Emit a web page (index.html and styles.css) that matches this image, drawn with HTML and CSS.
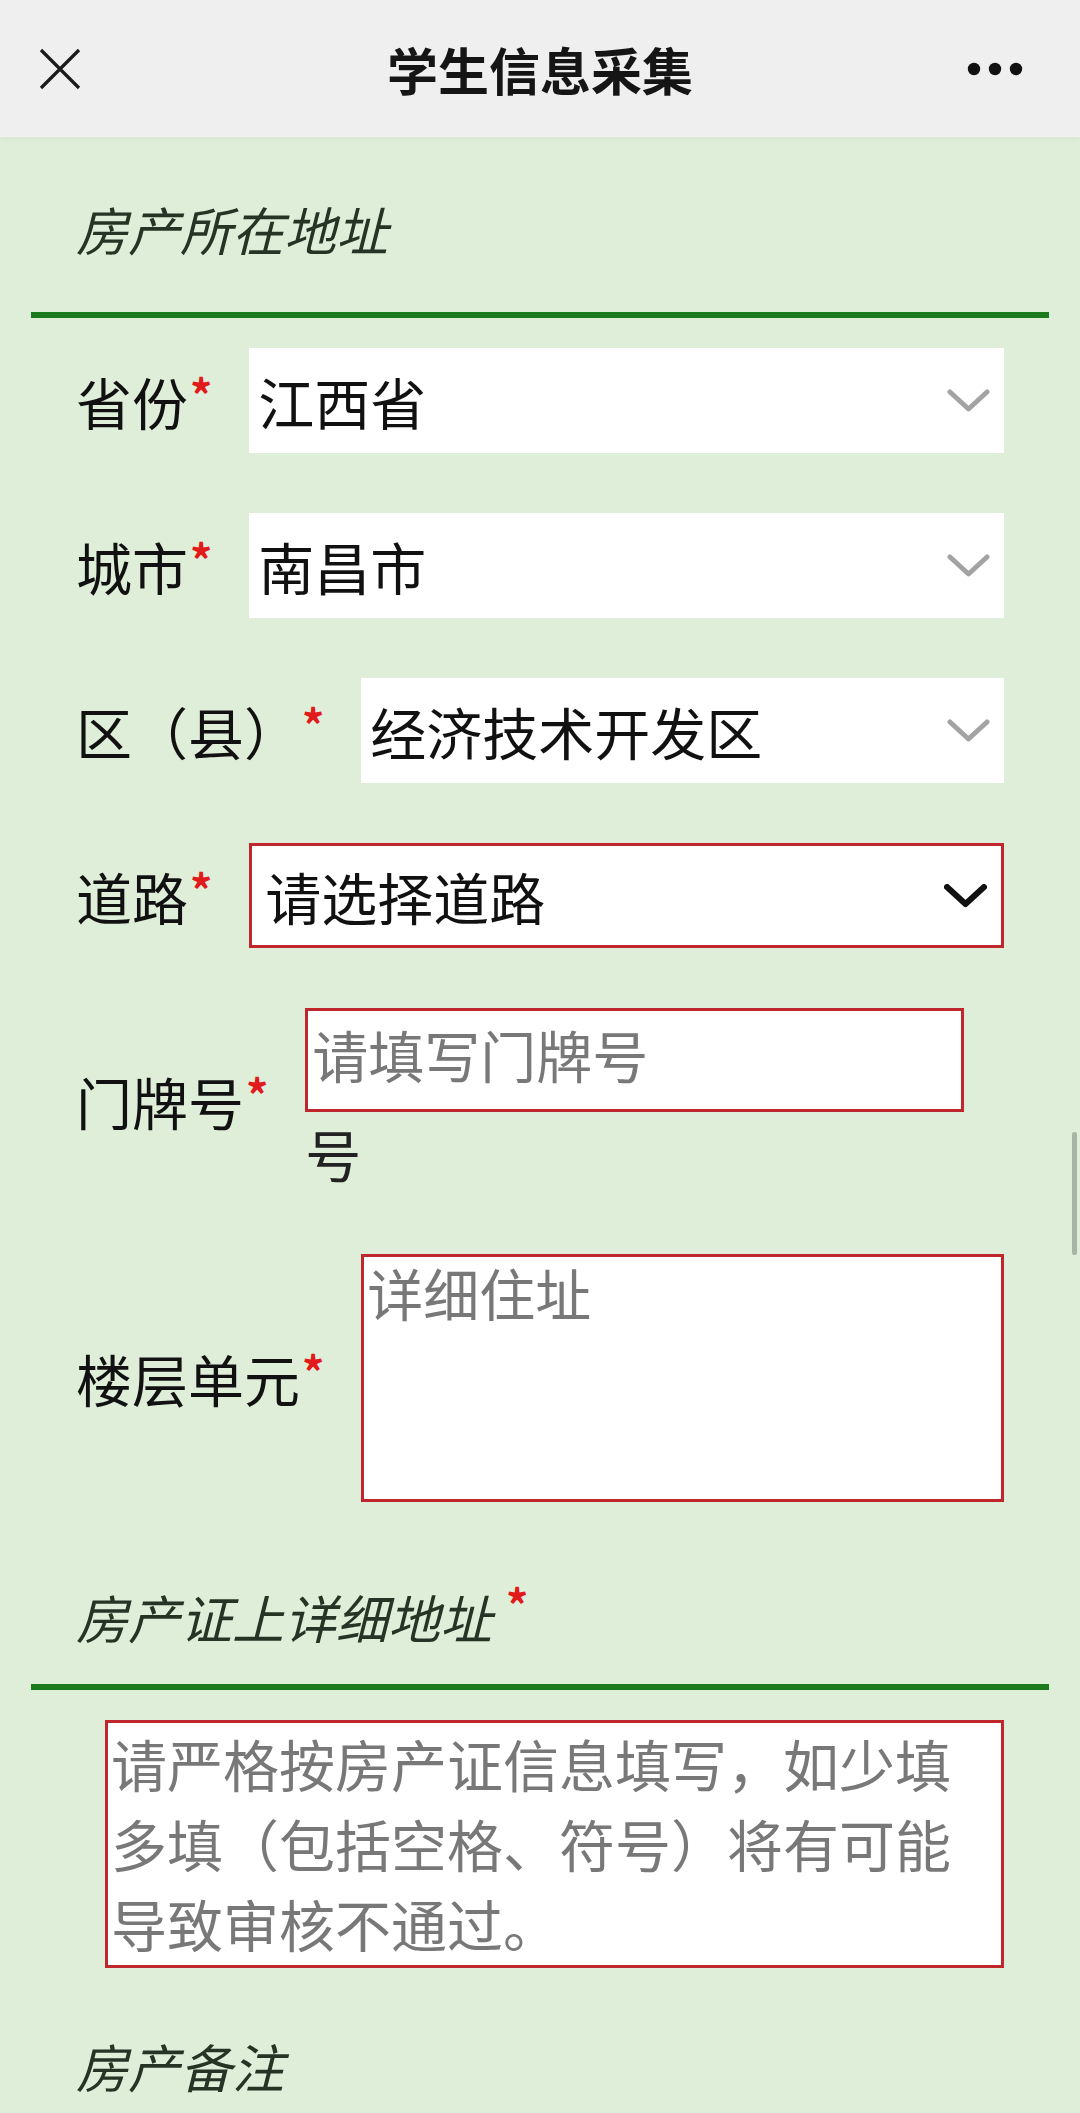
FILE: index.html
```html
<!DOCTYPE html>
<html lang="zh-CN">
<head>
<meta charset="UTF-8">
<meta name="viewport" content="width=device-width, initial-scale=1.0">
<title>学生信息采集</title>
<link rel="stylesheet" href="styles.css">
</head>
<body>

<div class="topbar">
  <div class="topbar-side">
    <svg class="icon-close" width="44" height="42" viewBox="0 0 44 42">
      <path d="M3 2 L41 40 M41 2 L3 40" stroke="#1a1a1a" stroke-width="3.2" fill="none"/>
    </svg>
  </div>
  <div class="topbar-title">学生信息采集</div>
  <div class="topbar-side right">
    <svg class="icon-more" width="56" height="14" viewBox="0 0 56 14">
      <circle cx="7" cy="7" r="6.2" fill="#111"/>
      <circle cx="28" cy="7" r="6.2" fill="#111"/>
      <circle cx="49" cy="7" r="6.2" fill="#111"/>
    </svg>
  </div>
</div>

<div class="page">
  <div class="section-title first">房产所在地址</div>

  <div class="form-row first">
    <label class="field-label">省份<span class="req">*</span></label>
    <div class="select">
      <span>江西省</span>
      <svg class="chevron" width="43" height="24" viewBox="0 0 43 24"><polyline points="3,3 21.5,20 40,3"/></svg>
    </div>
  </div>

  <div class="form-row">
    <label class="field-label">城市<span class="req">*</span></label>
    <div class="select">
      <span>南昌市</span>
      <svg class="chevron" width="43" height="24" viewBox="0 0 43 24"><polyline points="3,3 21.5,20 40,3"/></svg>
    </div>
  </div>

  <div class="form-row">
    <label class="field-label">区（县）<span class="req">*</span></label>
    <div class="select">
      <span>经济技术开发区</span>
      <svg class="chevron" width="43" height="24" viewBox="0 0 43 24"><polyline points="3,3 21.5,20 40,3"/></svg>
    </div>
  </div>

  <div class="form-row">
    <label class="field-label">道路<span class="req">*</span></label>
    <div class="select invalid">
      <span>请选择道路</span>
      <svg class="chevron dark" width="43" height="24" viewBox="0 0 43 24"><polyline points="3,3 21.5,20 40,3"/></svg>
    </div>
  </div>

  <div class="form-row">
    <label class="field-label">门牌号<span class="req">*</span></label>
    <div class="field-group">
      <input class="text-input invalid" type="text" placeholder="请填写门牌号">
      <span class="suffix">号</span>
    </div>
  </div>

  <div class="form-row last">
    <label class="field-label">楼层单元<span class="req">*</span></label>
    <textarea class="text-area invalid" placeholder="详细住址"></textarea>
  </div>

  <div class="section-title second">房产证上详细地址<span class="req">*</span></div>
  <textarea class="text-area wide invalid" placeholder="请严格按房产证信息填写，如少填多填（包括空格、符号）将有可能导致审核不通过。"></textarea>

  <div class="section-title third">房产备注</div>
</div>

<div class="scroll-thumb"></div>

</body>
</html>
```

FILE: styles.css
```css
body {
  margin: 0;
  padding: 0;
  background-color: #dfeed8;
  font-family: "Noto Sans CJK SC", "Noto Sans", sans-serif;
  color: #111;
}

.topbar {
  height: 137px;
  display: flex;
  align-items: center;
  background-color: #efefef;
  box-shadow: 0 2px 6px rgba(0,0,0,0.04);
}

.topbar-side {
  width: 150px;
  display: flex;
  align-items: center;
  padding-left: 38px;
  box-sizing: border-box;
}

.topbar-side.right {
  justify-content: flex-end;
  padding-left: 0;
  padding-right: 57px;
}

.topbar-title {
  flex: 1;
  text-align: center;
  font-size: 51px;
  font-weight: 700;
  line-height: 60px;
  color: #151515;
}

.page {
  padding: 0 31px;
}

.section-title {
  font-size: 52px;
  line-height: 72px;
  font-style: italic;
  color: #263426;
  padding-left: 45px;
  border-bottom: 6px solid #1b7a1b;
}

.section-title.first {
  padding-top: 56px;
  padding-bottom: 47px;
}

.section-title.second {
  padding-top: 79px;
  padding-bottom: 31px;
}

.section-title.third {
  padding-top: 62px;
  padding-bottom: 20px;
  border-bottom: none;
}

.section-title .req {
  font-style: normal;
  margin-left: 14px;
}

.form-row {
  display: flex;
  align-items: center;
  padding: 0 45px;
  margin-bottom: 60px;
}

.form-row.first {
  margin-top: 30px;
}

.form-row.last {
  margin-bottom: 0;
}

.field-label {
  font-size: 56px;
  line-height: 60px;
  white-space: nowrap;
  margin-right: 37px;
}

.req {
  color: #e11b1b;
  font-size: 44px;
  font-weight: 700;
  line-height: 1;
  vertical-align: top;
  margin-left: 2px;
}

.select {
  flex: 1;
  height: 105px;
  box-sizing: border-box;
  background-color: #fff;
  display: flex;
  align-items: center;
  justify-content: space-between;
  padding: 0 14px 0 9px;
  font-size: 56px;
  line-height: 1;
}

.select.invalid {
  border: 3px solid #c0272d;
  padding: 0 14px 0 13px;
}

.chevron polyline {
  fill: none;
  stroke: #a3a3a3;
  stroke-width: 5;
  stroke-linecap: round;
  stroke-linejoin: round;
}

.chevron.dark polyline {
  stroke: #111;
  stroke-width: 6;
}

.field-group {
  flex: 1;
  display: flex;
  flex-wrap: wrap;
}

.text-input {
  width: 659px;
  height: 104px;
  box-sizing: border-box;
  font-family: inherit;
  font-size: 56px;
  color: #111;
  background-color: #fff;
  padding: 0 6px 14px 4px;
  outline: none;
}

.invalid {
  border: 3px solid #c0272d;
}

.text-input::placeholder,
.text-area::placeholder {
  color: #787878;
  opacity: 1;
}

.suffix {
  font-size: 56px;
  line-height: 82px;
  color: #222;
}

.text-area {
  flex: 1;
  height: 248px;
  box-sizing: border-box;
  font-family: inherit;
  font-size: 56px;
  line-height: 68px;
  padding: 1px 3px;
  background-color: #fff;
  resize: none;
  outline: none;
  overflow: hidden;
}

.text-area.wide {
  display: block;
  width: 899px;
  margin: 30px 0 0 74px;
  line-height: 80px;
  padding: 0 6px 0 3px;
}

.scroll-thumb {
  position: absolute;
  left: 1072px;
  top: 1132px;
  width: 5px;
  height: 123px;
  border-radius: 2px;
  background-color: #a8b5a6;
}
```
